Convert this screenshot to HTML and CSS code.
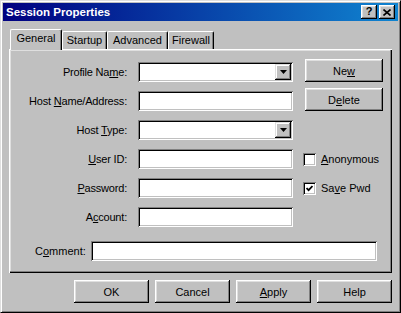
FILE: index.html
```html
<!DOCTYPE html>
<html lang="en">
<head>
    <meta charset="UTF-8">
    <title>Session Properties</title>
    <link rel="stylesheet" href="styles.css">
</head>
<body>
    <div class="window">
        <div class="titlebar">
            <span class="title">Session Properties</span>
            <span class="cap-btn help">?</span>
            <span class="cap-btn close">
                <svg width="8" height="7" viewBox="0 0 8 7"><path d="M0.5 0.5 L7.5 6.5 M7.5 0.5 L0.5 6.5" stroke="#000" stroke-width="1.6" fill="none"/></svg>
            </span>
        </div>

        <div class="tabs">
            <div class="tab active t-general">General</div>
            <div class="tab t-startup">Startup</div>
            <div class="tab t-advanced">Advanced</div>
            <div class="tab t-firewall">Firewall</div>
        </div>

        <div class="panel">
            <div class="form">
                <label class="lbl">Profile Na<u>m</u>e:</label>
                <div class="field combo"><span class="drop"><svg width="7" height="4" viewBox="0 0 7 4"><path d="M0 0 H7 L3.5 4 Z" fill="#000"/></svg></span></div>
                <button class="btn side">Ne<u>w</u></button>

                <label class="lbl">Host <u>N</u>ame/Address:</label>
                <div class="field"></div>
                <button class="btn side">D<u>e</u>lete</button>

                <label class="lbl">Host <u>T</u>ype:</label>
                <div class="field combo"><span class="drop"><svg width="7" height="4" viewBox="0 0 7 4"><path d="M0 0 H7 L3.5 4 Z" fill="#000"/></svg></span></div>
                <span></span>

                <label class="lbl"><u>U</u>ser ID:</label>
                <div class="field"></div>
                <div class="check"><span class="box"></span><span><u>A</u>nonymous</span></div>

                <label class="lbl"><u>P</u>assword:</label>
                <div class="field"></div>
                <div class="check"><span class="box"><svg width="7" height="7" viewBox="0 0 7 7"><path d="M0.5 3 L2.6 5.2 L6.5 1" stroke="#000" stroke-width="1.8" fill="none"/></svg></span><span>Sa<u>v</u>e Pwd</span></div>

                <label class="lbl">A<u>c</u>count:</label>
                <div class="field"></div>
                <span></span>
            </div>

            <div class="comment-row">
                <label class="comment-lbl">C<u>o</u>mment:</label>
                <div class="field comment"></div>
            </div>
        </div>

        <div class="footer">
            <button class="btn">OK</button>
            <button class="btn">Cancel</button>
            <button class="btn"><u>A</u>pply</button>
            <button class="btn">Help</button>
        </div>
    </div>
</body>
</html>
```

FILE: styles.css
```css
body {
    margin: 0;
    background: #c0c0c0;
}
.window {
    width: 401px;
    height: 313px;
    box-sizing: border-box;
    padding: 2px;
    background: #c0c0c0;
    border: 1px solid;
    border-color: #dfdfdf #000 #000 #dfdfdf;
    box-shadow: inset 1px 1px #fff, inset -1px -1px #808080;
    font: 11px "Liberation Sans", Arial, sans-serif;
    color: #000;
    display: flex;
    flex-direction: column;
}
.titlebar {
    height: 18px;
    display: flex;
    align-items: center;
    padding: 0 3px 0 3px;
    background: linear-gradient(to right, #000080, #1084d0);
    color: #fff;
}
.title {
    flex: 1;
    font-weight: bold;
    font-size: 11.5px;
}
.cap-btn {
    width: 16px;
    height: 14px;
    box-sizing: border-box;
    background: #c0c0c0;
    box-shadow: inset -1px -1px #000, inset 1px 1px #fff, inset -2px -2px #808080, inset 2px 2px #dfdfdf;
    display: flex;
    align-items: center;
    justify-content: center;
    color: #000;
    font-weight: bold;
    font-size: 11px;
    line-height: 1;
}
.cap-btn.help {
    margin-right: 2px;
    padding-bottom: 1px;
}
.tabs {
    display: flex;
    align-items: flex-end;
    height: 20px;
    margin: 8px 6px 0;
}
.tab {
    height: 18px;
    box-sizing: border-box;
    padding-top: 2px;
    text-align: center;
    border-top: 1px solid #fff;
    border-left: 1px solid #fff;
    border-right: 1px solid #000;
    border-radius: 2px 2px 0 0;
    box-shadow: inset -1px 0 #808080;
}
.tab.active {
    height: 21px;
    margin-bottom: -1px;
    margin-left: 1px;
    padding-top: 2px;
    position: relative;
    z-index: 1;
    background: #c0c0c0;
}
.t-general { width: 52px; }
.t-startup { width: 45px; }
.t-advanced { width: 61px; }
.t-firewall { width: 46px; }
.panel {
    height: 224px;
    box-sizing: border-box;
    margin: 0 6px;
    padding-top: 13px;
    box-shadow: inset 1px 1px #fff, inset -1px -1px #000, inset -2px -2px #808080, inset 2px 2px #dfdfdf;
}
.form {
    display: grid;
    grid-template-columns: 129px 165px 1fr;
    grid-auto-rows: 20px;
    row-gap: 9px;
    align-items: center;
}
.lbl {
    text-align: right;
    padding-right: 11px;
    letter-spacing: -0.2px;
}
.field {
    height: 20px;
    width: 155px;
    box-sizing: border-box;
    background: #fff;
    box-shadow: inset 1px 1px #808080, inset -1px -1px #fff, inset 2px 2px #000, inset -2px -2px #c0c0c0;
}
.combo {
    display: flex;
    justify-content: flex-end;
    align-items: center;
    padding-right: 2px;
}
.drop {
    width: 16px;
    height: 16px;
    box-sizing: border-box;
    background: #c0c0c0;
    box-shadow: inset -1px -1px #000, inset 1px 1px #dfdfdf, inset -2px -2px #808080, inset 2px 2px #fff;
    display: flex;
    align-items: center;
    justify-content: center;
}
.btn {
    width: 75px;
    height: 23px;
    padding: 0;
    border: none;
    background: #c0c0c0;
    box-shadow: inset -1px -1px #000, inset 1px 1px #fff, inset -2px -2px #808080, inset 2px 2px #dfdfdf;
    font: 11px "Liberation Sans", Arial, sans-serif;
    color: #000;
}
.btn.side {
    width: 78px;
    margin: -3px 0 0 2px;
    align-self: end;
}
.check {
    display: flex;
    align-items: center;
    gap: 5px;
}
.box {
    width: 13px;
    height: 13px;
    box-sizing: border-box;
    background: #fff;
    box-shadow: inset 1px 1px #808080, inset -1px -1px #fff, inset 2px 2px #000, inset -2px -2px #c0c0c0;
    display: flex;
    align-items: center;
    justify-content: center;
}
.comment-row {
    display: flex;
    align-items: center;
    margin-top: 14px;
    padding: 0 15px 0 26px;
}
.comment-lbl {
    flex: 1;
}
.field.comment {
    width: 286px;
}
.footer {
    display: flex;
    justify-content: flex-end;
    gap: 6px;
    margin-top: 7px;
    padding-right: 6px;
}
```
